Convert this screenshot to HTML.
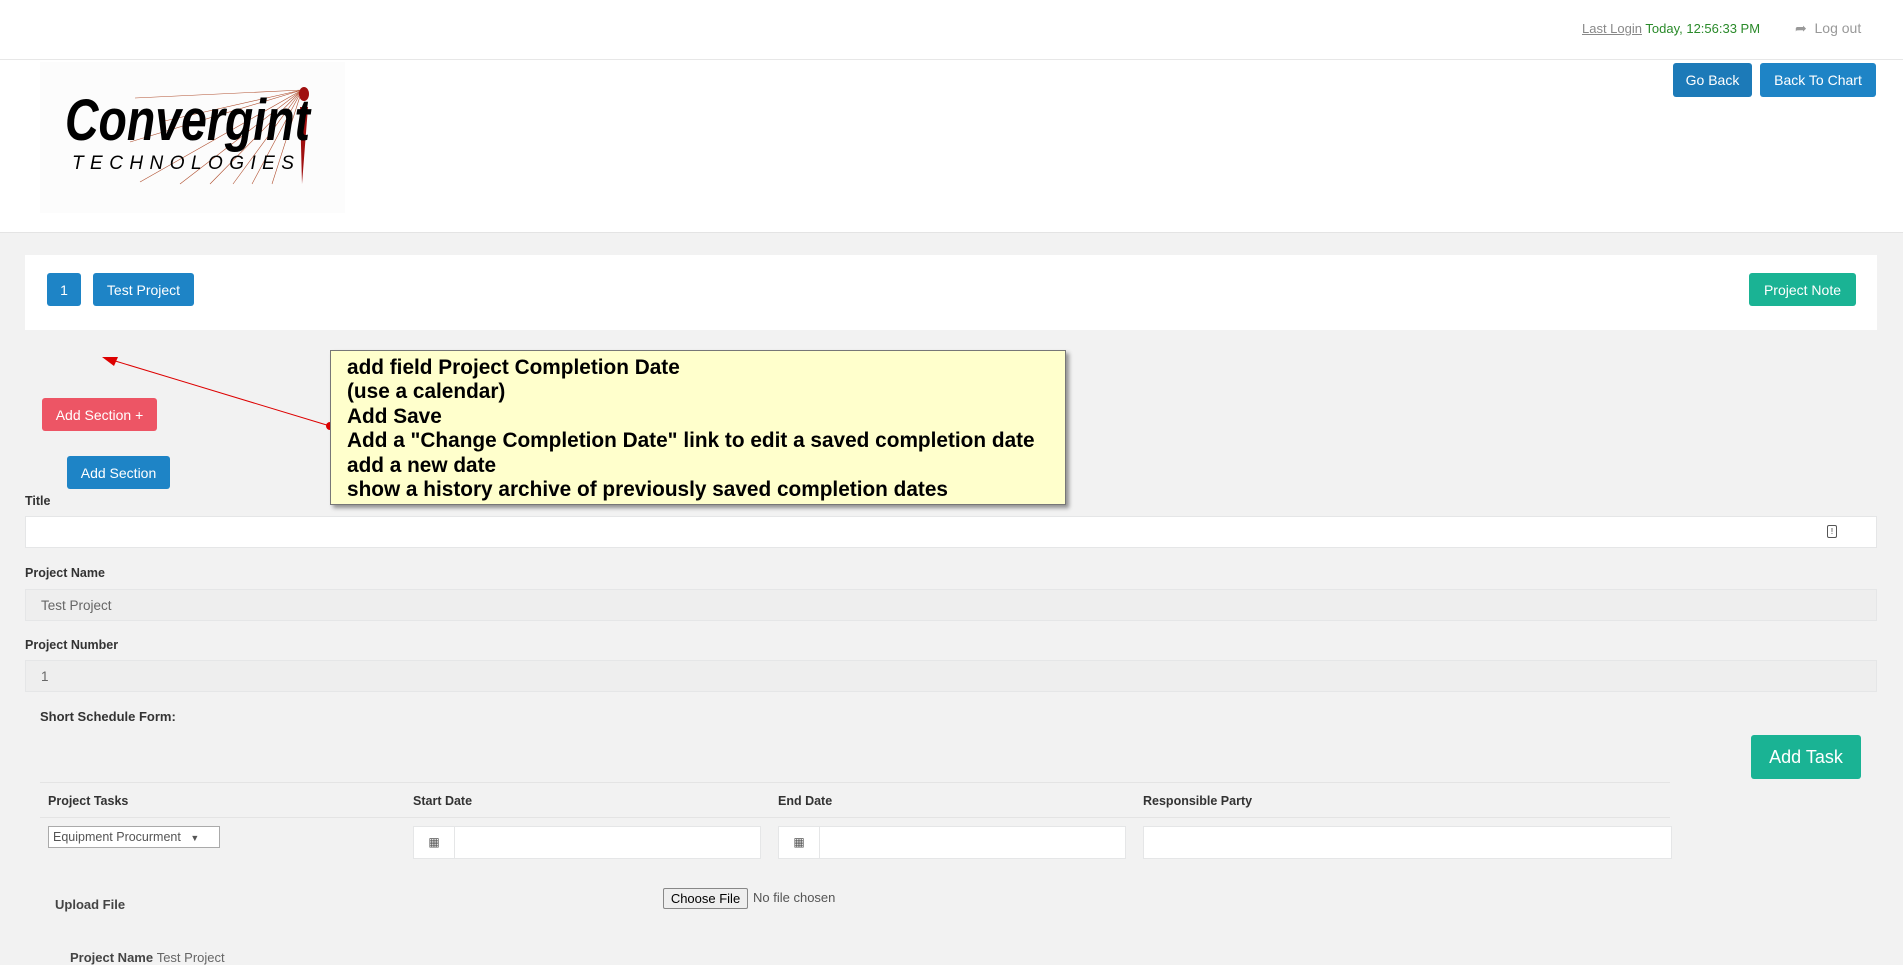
<!DOCTYPE html>
<html><head><meta charset="utf-8"><style>
*{box-sizing:border-box;margin:0;padding:0}
body{width:1903px;height:955px;overflow:hidden;background:#f2f2f2;font-family:"Liberation Sans",sans-serif;font-size:13px;color:#333;position:relative}
.abs{position:absolute}
.btn{position:absolute;color:#fff;border-radius:3px;font-size:14px;display:flex;align-items:center;justify-content:center}
.blue{background:#1e84c6}
.lbl{position:absolute;font-weight:bold;font-size:12.5px;color:#333}
.inp{position:absolute;background:#fff;border:1px solid #e5e6e7}
.ro{background:#eee;border:1px solid #e5e6e7}
</style></head><body>
<div class="abs" style="left:0;top:0;width:1903px;height:233px;background:#fff;border-bottom:1px solid #e4e4e4"></div>
<div class="abs" style="left:0;top:59px;width:1903px;height:1px;background:#e7e7e7"></div>
<div class="abs" style="left:1582px;top:21px;font-size:13px;color:#888"><span style="text-decoration:underline">Last Login</span> <span style="color:#2a8a2a">Today, 12:56:33 PM</span></div>
<div class="abs" style="left:1795px;top:20px;font-size:14px;color:#999">&#x27A6;&nbsp;&nbsp;Log out</div>
<div class="btn" style="left:1673px;top:63px;width:79px;height:34px;background:#1c7ab8">Go Back</div>
<div class="btn blue" style="left:1760px;top:63px;width:116px;height:34px">Back To Chart</div>
<div class="abs" style="left:40px;top:62px;width:305px;height:151px;background:#fcfcfc"></div>
<svg class="abs" style="left:40px;top:62px" width="305" height="151">
<g stroke="#b05030" stroke-width="0.6">
<line x1="262" y1="28" x2="95" y2="36"/><line x1="262" y1="28" x2="90" y2="80"/><line x1="262" y1="28" x2="100" y2="120"/>
<line x1="262" y1="28" x2="140" y2="122"/><line x1="262" y1="28" x2="170" y2="122"/><line x1="262" y1="28" x2="193" y2="122"/>
<line x1="262" y1="28" x2="212" y2="122"/><line x1="262" y1="28" x2="232" y2="122"/><line x1="262" y1="28" x2="120" y2="60"/></g>
<ellipse cx="264" cy="32" rx="5" ry="7" fill="#a01010"/>
<polygon points="260,45 268,45 262,122" fill="#a01010"/>
<text x="25" y="78" font-family="Liberation Sans" font-weight="bold" font-style="italic" font-size="58" textLength="245" lengthAdjust="spacingAndGlyphs">Convergint</text>
<text x="32" y="107" font-family="Liberation Sans" font-style="italic" font-size="19" textLength="222" lengthAdjust="spacing">TECHNOLOGIES</text>
</svg>
<div class="abs" style="left:25px;top:255px;width:1852px;height:75px;background:#fff"></div>
<div class="btn blue" style="left:47px;top:273px;width:34px;height:33px">1</div>
<div class="btn blue" style="left:93px;top:273px;width:101px;height:33px">Test Project</div>
<div class="btn" style="left:1749px;top:273px;width:107px;height:33px;background:#1ab394">Project Note</div>
<div class="btn" style="left:42px;top:398px;width:115px;height:33px;background:#ed5565">Add Section +</div>
<div class="btn blue" style="left:67px;top:456px;width:103px;height:33px">Add Section</div>
<div class="lbl" style="left:25px;top:494px">Title</div>
<div class="inp" style="left:25px;top:516px;width:1852px;height:32px"></div>
<div class="abs" style="left:1827px;top:525px;width:10px;height:13px;border:1px solid #555;border-radius:2px;font-size:8px;text-align:center;line-height:11px">!</div>
<div class="lbl" style="left:25px;top:566px">Project Name</div>
<div class="inp ro" style="left:25px;top:589px;width:1852px;height:32px;padding:8px 15px;color:#666;font-size:13.5px">Test Project</div>
<div class="lbl" style="left:25px;top:638px">Project Number</div>
<div class="inp ro" style="left:25px;top:660px;width:1852px;height:32px;padding:8px 15px;color:#666;font-size:13.5px">1</div>
<div class="lbl" style="left:40px;top:709px;font-size:13px">Short Schedule Form:</div>
<div class="btn" style="left:1751px;top:735px;width:110px;height:44px;background:#1ab394;font-size:18px">Add Task</div>
<div class="abs" style="left:40px;top:782px;width:1630px;height:1px;background:#e4e4e4"></div>
<div class="lbl" style="left:48px;top:794px">Project Tasks</div>
<div class="lbl" style="left:413px;top:794px">Start Date</div>
<div class="lbl" style="left:778px;top:794px">End Date</div>
<div class="lbl" style="left:1143px;top:794px">Responsible Party</div>
<div class="abs" style="left:40px;top:817px;width:1630px;height:1px;background:#e4e4e4"></div>
<div class="abs" style="left:48px;top:826px;width:172px;height:22px;background:#fff;border:1px solid #aaa;font-size:12.5px;color:#555;padding:3px 4px">Equipment Procurment <span style="font-size:9px;margin-left:6px">▼</span></div>
<div class="inp" style="left:413px;top:826px;width:348px;height:33px"><div style="width:41px;height:31px;border-right:1px solid #e5e6e7;text-align:center;line-height:31px;font-size:12px;color:#555">▦</div></div>
<div class="inp" style="left:778px;top:826px;width:348px;height:33px"><div style="width:41px;height:31px;border-right:1px solid #e5e6e7;text-align:center;line-height:31px;font-size:12px;color:#555">▦</div></div>
<div class="inp" style="left:1143px;top:826px;width:529px;height:33px"></div>
<div class="abs" style="left:55px;top:897px;font-size:13px;font-weight:bold;color:#444">Upload File</div>
<div class="abs" style="left:663px;top:888px;width:85px;height:21px;background:#eee;border:1px solid #888;border-radius:2px;font-size:13px;text-align:center;line-height:19px;color:#000">Choose File</div>
<div class="abs" style="left:753px;top:890px;font-size:13px;color:#555">No file chosen</div>
<div class="abs" style="left:70px;top:950px;font-size:13px;font-weight:bold;color:#444">Project Name <span style="font-weight:normal;color:#666">Test Project</span></div>
<svg class="abs" style="left:0;top:0" width="1903" height="955">
<line x1="330" y1="426" x2="112" y2="360" stroke="#d00" stroke-width="1"/>
<polygon points="102,357 118,357 114,366" fill="#d00"/>
<circle cx="330" cy="426" r="4" fill="#d00"/>
</svg>
<div class="abs" style="left:330px;top:350px;width:736px;height:155px;background:#ffffcc;border:1px solid #777;box-shadow:3px 3px 4px rgba(0,0,0,.4);padding:5px 16px;font-weight:bold;font-size:20.8px;line-height:24.4px;color:#000;white-space:nowrap">add field Project Completion Date<br>(use a calendar)<br>Add Save<br>Add a "Change Completion Date" link to edit a saved completion date<br>add a new date<br>show a history archive of previously saved completion dates</div>
</body></html>
